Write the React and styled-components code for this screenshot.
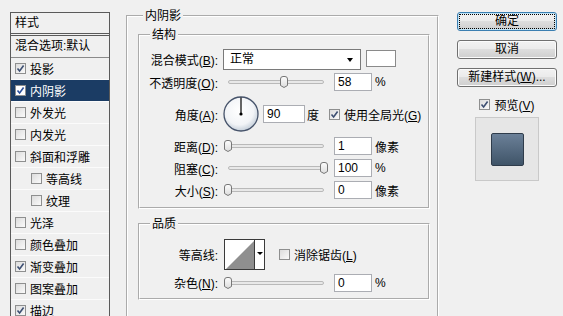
import React from "react";
import styled, { createGlobalStyle } from "styled-components";

const GlobalStyle = createGlobalStyle`
  html, body {
    margin: 0;
    padding: 0;
    background: #f0f0f0;
  }
  body {
    font-family: "Liberation Sans", "Noto Sans CJK SC", sans-serif;
    font-size: 12px;
    color: #000;
  }
`;

const Dialog = styled.div`
  width: 563px;
  height: 316px;
  overflow: hidden;
  display: flex;
  align-items: flex-start;
  background: #f0f0f0;
`;

// ----- left style list -----
const StyleList = styled.div`
  flex-shrink: 0;
  width: 100px;
  margin: 12px 0 0 10px;
  box-sizing: border-box;
  border: 1px solid #5a5a5a;
  border-bottom: none;
  background: #f0f0f0;
`;

const ListHeader = styled.div`
  height: 20px;
  line-height: 20px;
  padding-left: 4px;
  border-bottom: 3px double #5a5a5a;
`;

const BlendRow = styled.div`
  height: 21px;
  line-height: 21px;
  padding-left: 4px;
  border-bottom: 1px solid #8a8a8a;
`;

const ListRow = styled.div`
  display: flex;
  align-items: center;
  gap: 4px;
  height: 21px;
  padding-left: ${(p) => (p.indent ? "20px" : "4px")};
  border-bottom: 1px solid #fbfbfb;
  background: ${(p) => (p.selected ? "#1b3c64" : "transparent")};
  color: ${(p) => (p.selected ? "#fff" : "#000")};
`;

const Box = styled.span`
  flex-shrink: 0;
  display: inline-flex;
  width: 11px;
  height: 11px;
  box-sizing: border-box;
  border: 1px solid #8e8f8f;
  background: ${(p) =>
    p.selected ? "#fff" : "linear-gradient(135deg, #dcdcdc, #fafafa)"};
  svg {
    display: block;
  }
`;

const Check = ({ checked, selected }) => (
  <Box selected={selected}>
    {checked && (
      <svg width="9" height="9" viewBox="0 0 9 9">
        <path
          d="M1.5 4.5 L3.6 7 L7.6 1.5"
          fill="none"
          stroke={selected ? "#2a4f9a" : "#3d4f72"}
          strokeWidth="1.6"
        />
      </svg>
    )}
  </Box>
);

// ----- middle group boxes -----
const OuterGroup = styled.fieldset`
  flex-shrink: 0;
  box-sizing: border-box;
  width: 313px;
  height: 330px;
  margin: 8px 0 0 16px;
  padding: 3px 7px 0 10px;
  border: 2px groove #fff;
  min-inline-size: 0;
`;

const Group = styled.fieldset`
  box-sizing: border-box;
  margin: ${(p) => (p.gap ? "7px 0 0" : "0")};
  padding: 0;
  border: 2px groove #fff;
  min-inline-size: 0;
`;

const Legend = styled.legend`
  margin-left: ${(p) => p.offset || 10}px;
  padding: 0 2px;
  line-height: 16px;
  font-size: 12px;
`;

const FormGrid = styled.div`
  display: grid;
  grid-template-columns: 78px 1fr;
  column-gap: 5px;
  padding: ${(p) => p.pad};
`;

const Label = styled.div`
  display: flex;
  align-items: center;
  justify-content: flex-end;
  height: ${(p) => p.h || 22}px;
  white-space: nowrap;
`;

const Controls = styled.div`
  display: flex;
  align-items: center;
  white-space: nowrap;
`;

const Select = styled.div`
  position: relative;
  width: 138px;
  height: 21px;
  box-sizing: border-box;
  border: 1px solid #7a7a7a;
  background: #fff;
  padding-left: 6px;
  line-height: 19px;
  &::after {
    content: "";
    position: absolute;
    right: 7px;
    top: 8px;
    border-left: 3.5px solid transparent;
    border-right: 3.5px solid transparent;
    border-top: 4px solid #000;
  }
`;

const Swatch = styled.div`
  align-self: flex-start;
  margin: 2px 0 0 5px;
  width: 30px;
  height: 17px;
  box-sizing: border-box;
  border: 1px solid #8a8a8a;
  background: #fff;
`;

const SliderWrap = styled.div`
  position: relative;
  width: 104px;
  height: 12px;
  margin-left: 1px;
`;

const Track = styled.div`
  position: absolute;
  left: 4px;
  right: 4px;
  top: 4px;
  height: 4px;
  box-sizing: border-box;
  border: 1px solid #b9b9b9;
  border-radius: 2px;
  background: #e8e8e8;
`;

const Thumb = styled.svg`
  position: absolute;
  top: 0;
`;

const Slider = ({ value }) => (
  <SliderWrap>
    <Track />
    <Thumb
      width="8"
      height="12"
      viewBox="0 0 8 12"
      style={{ left: `${(value / 100) * 96}px` }}
    >
      <defs>
        <linearGradient id="thumbFill" x1="0" y1="0" x2="0" y2="1">
          <stop offset="0" stopColor="#fdfdfd" />
          <stop offset="1" stopColor="#dcdcdc" />
        </linearGradient>
      </defs>
      <path
        d="M0.5 3 Q0.5 0.5 3 0.5 H5 Q7.5 0.5 7.5 3 V9.5 L4 11.5 L0.5 9.5 Z"
        fill="url(#thumbFill)"
        stroke="#777"
      />
    </Thumb>
  </SliderWrap>
);

const Field = styled.div`
  width: ${(p) => p.w || 38}px;
  height: 18px;
  box-sizing: border-box;
  margin-left: ${(p) => (p.ml === undefined ? 6 : p.ml)}px;
  padding-left: 3px;
  border: 1px solid #abadb3;
  background: #fff;
  line-height: 16px;
`;

const Unit = styled.span`
  margin-left: ${(p) => p.ml || 3}px;
`;

const CheckLabel = styled.label`
  display: flex;
  align-items: center;
  gap: 4px;
  margin-left: ${(p) => p.ml || 0}px;
`;

const Dial = () => (
  <svg width="36" height="36" viewBox="0 0 36 36">
    <defs>
      <radialGradient id="dialFill" cx="0.45" cy="0.4" r="0.6">
        <stop offset="0" stopColor="#ffffff" />
        <stop offset="0.7" stopColor="#f2f4f7" />
        <stop offset="1" stopColor="#c5cfda" />
      </radialGradient>
    </defs>
    <circle cx="18" cy="18" r="17" fill="url(#dialFill)" stroke="#46536a" strokeWidth="1.3" />
    <line x1="18" y1="18" x2="18" y2="1.5" stroke="#000" strokeWidth="1.2" />
    <circle cx="18" cy="18" r="1.6" fill="#000" />
  </svg>
);

const Contour = styled.div`
  display: flex;
  width: 41px;
  height: 31px;
  margin-left: 1px;
  box-sizing: border-box;
  border: 1px solid #3a3a3a;
  background: #fff;
`;

const ContourArrow = styled.div`
  position: relative;
  flex: 1;
  border-left: 1px solid #3a3a3a;
  &::after {
    content: "";
    position: absolute;
    left: 2px;
    top: 12px;
    border-left: 3px solid transparent;
    border-right: 3px solid transparent;
    border-top: 3px solid #000;
  }
`;

// ----- right column -----
const Side = styled.div`
  flex-shrink: 0;
  width: 100px;
  margin: 12px 0 0 18px;
  display: flex;
  flex-direction: column;
  align-items: center;
`;

const Button = styled.div`
  width: 100px;
  height: 19px;
  box-sizing: border-box;
  margin-bottom: 9px;
  border: 1px solid ${(p) => (p.primary ? "#3c7fb1" : "#707070")};
  border-radius: 3px;
  background: linear-gradient(#f2f2f2 0%, #ebebeb 45%, #dddddd 50%, #cfcfcf 100%);
  box-shadow: ${(p) => (p.primary ? "inset 0 0 0 1px #bfe3f6" : "inset 0 0 0 1px #fbfbfb")};
  text-align: center;
  line-height: 17px;
  white-space: nowrap;
  outline: ${(p) => (p.primary ? "1px dotted #000" : "none")};
  outline-offset: -3px;
`;

const Preview = styled.div`
  display: flex;
  align-items: center;
  justify-content: center;
  width: 64px;
  height: 64px;
  margin-top: 4px;
  box-sizing: border-box;
  border: 1px solid #c9c9c9;
  background: #e6e6e6;
`;

const PreviewSwatch = styled.div`
  width: 33px;
  height: 33px;
  box-sizing: border-box;
  border: 1px solid #2f3c4b;
  border-radius: 2px;
  background: linear-gradient(#6b8098, #3f5468);
`;

const styles = [
  { label: "投影", checked: true },
  { label: "内阴影", checked: true, selected: true },
  { label: "外发光" },
  { label: "内发光" },
  { label: "斜面和浮雕" },
  { label: "等高线", indent: true },
  { label: "纹理", indent: true },
  { label: "光泽" },
  { label: "颜色叠加" },
  { label: "渐变叠加", checked: true },
  { label: "图案叠加" },
  { label: "描边", checked: true },
];

const sliderRows = [
  { label: "距离", key: "D", value: 0, text: "1", unit: "像素" },
  { label: "阻塞", key: "C", value: 100, text: "100", unit: "%" },
  { label: "大小", key: "S", value: 0, text: "0", unit: "像素" },
];

export default function App() {
  return (
    <>
      <GlobalStyle />
      <Dialog>
        <StyleList>
          <ListHeader>样式</ListHeader>
          <BlendRow>混合选项:默认</BlendRow>
          {styles.map((s) => (
            <ListRow key={s.label} indent={s.indent} selected={s.selected}>
              <Check checked={s.checked} selected={s.selected} />
              <span>{s.label}</span>
            </ListRow>
          ))}
        </StyleList>

        <OuterGroup>
          <Legend offset={5}>内阴影</Legend>
          <Group>
            <Legend>结构</Legend>
            <FormGrid pad="5px 0 6px">
              <Label h={23}>
                <span>
                  混合模式(<u>B</u>):
                </span>
              </Label>
              <Controls>
                <Select>正常</Select>
                <Swatch />
              </Controls>

              <Label>
                <span>
                  不透明度(<u>O</u>):
                </span>
              </Label>
              <Controls>
                <Slider value={58} />
                <Field>58</Field>
                <Unit>%</Unit>
              </Controls>

              <Label h={42}>
                <span>
                  角度(<u>A</u>):
                </span>
              </Label>
              <Controls>
                <Dial />
                <Field w={42} ml={4}>
                  90
                </Field>
                <Unit ml={2}>度</Unit>
                <CheckLabel ml={10}>
                  <Check checked />
                  <span>
                    使用全局光(<u>G</u>)
                  </span>
                </CheckLabel>
              </Controls>

              {sliderRows.map((r) => (
                <React.Fragment key={r.key}>
                  <Label>
                    <span>
                      {r.label}(<u>{r.key}</u>):
                    </span>
                  </Label>
                  <Controls>
                    <Slider value={r.value} />
                    <Field>{r.text}</Field>
                    <Unit>{r.unit}</Unit>
                  </Controls>
                </React.Fragment>
              ))}
            </FormGrid>
          </Group>

          <Group gap>
            <Legend>品质</Legend>
            <FormGrid pad="6px 0 4px">
              <Label h={33}>
                <span>等高线:</span>
              </Label>
              <Controls>
                <Contour>
                  <svg width="29" height="29" viewBox="0 0 29 29">
                    <polygon points="1,29 29,1 29,29" fill="#8f8f8f" />
                  </svg>
                  <ContourArrow />
                </Contour>
                <CheckLabel ml={14}>
                  <Check />
                  <span>
                    消除锯齿(<u>L</u>)
                  </span>
                </CheckLabel>
              </Controls>

              <Label h={23}>
                <span>
                  杂色(<u>N</u>):
                </span>
              </Label>
              <Controls>
                <Slider value={0} />
                <Field>0</Field>
                <Unit>%</Unit>
              </Controls>
            </FormGrid>
          </Group>
        </OuterGroup>

        <Side>
          <Button primary>确定</Button>
          <Button>取消</Button>
          <Button>
            新建样式(<u>W</u>)...
          </Button>
          <CheckLabel>
            <Check checked />
            <span>
              预览(<u>V</u>)
            </span>
          </CheckLabel>
          <Preview>
            <PreviewSwatch />
          </Preview>
        </Side>
      </Dialog>
    </>
  );
}
